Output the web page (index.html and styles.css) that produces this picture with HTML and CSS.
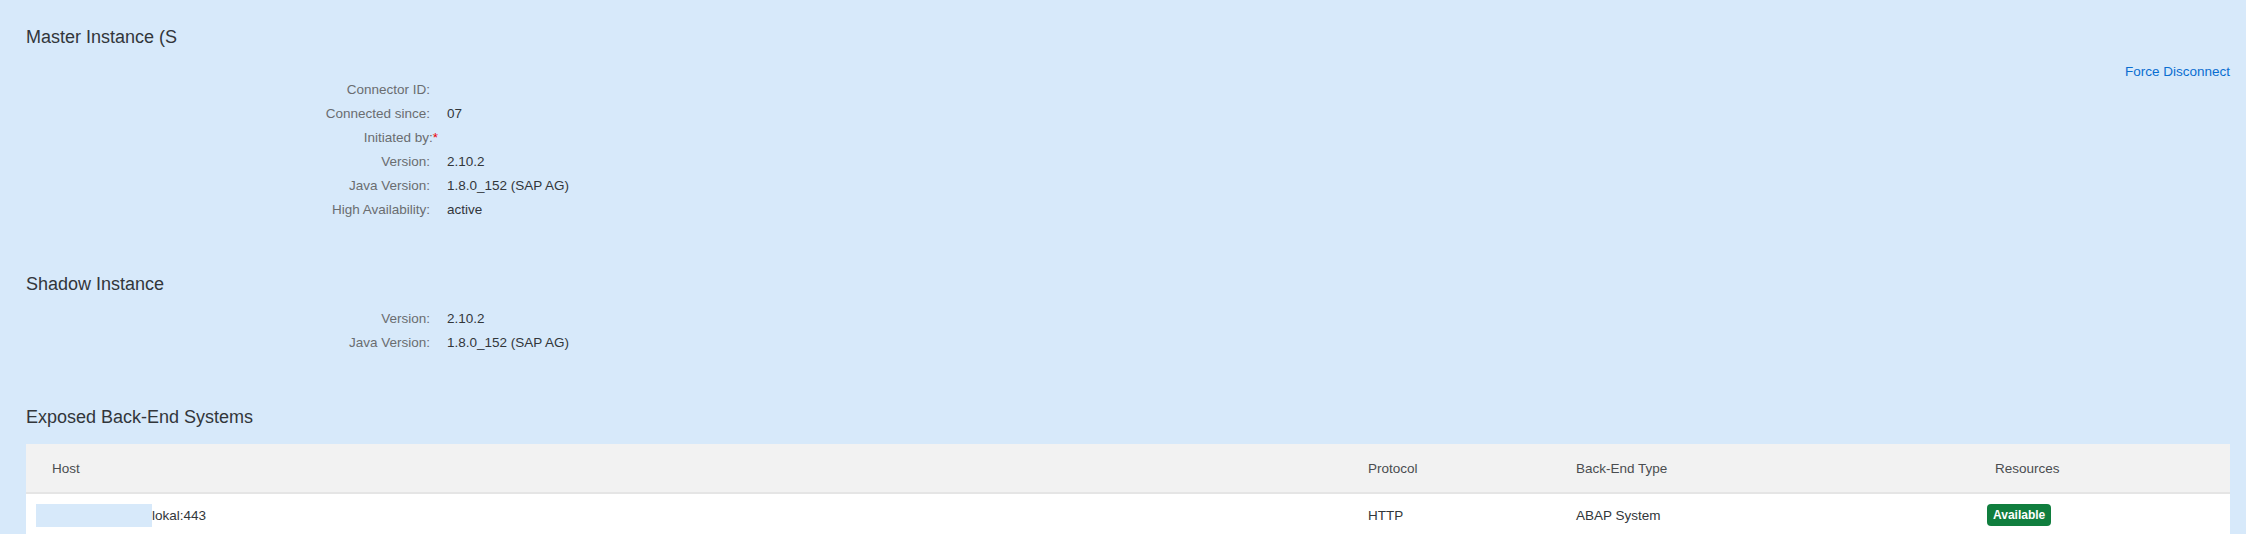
FILE: index.html
```html
<!DOCTYPE html>
<html lang="en">
<head>
    <meta charset="UTF-8" />
    <title>Connector</title>
    <link rel="stylesheet" href="styles.css">
</head>
<body>
    <div class="pagina">
        <h2 class="titulo">Master Instance (S</h2>
        <div class="barra">
            <a class="link" href="#">Force Disconnect</a>
        </div>
        <div class="form">
            <div class="rotulo">Connector ID:</div><div class="valor"></div>
            <div class="rotulo">Connected since:</div><div class="valor">07</div>
            <div class="rotulo">Initiated by:<span class="req">*</span></div><div class="valor"></div>
            <div class="rotulo">Version:</div><div class="valor">2.10.2</div>
            <div class="rotulo">Java Version:</div><div class="valor">1.8.0_152 (SAP AG)</div>
            <div class="rotulo">High Availability:</div><div class="valor">active</div>
        </div>

        <h2 class="titulo secao">Shadow Instance</h2>
        <div class="form">
            <div class="rotulo">Version:</div><div class="valor">2.10.2</div>
            <div class="rotulo">Java Version:</div><div class="valor">1.8.0_152 (SAP AG)</div>
        </div>

        <h2 class="titulo secao">Exposed Back-End Systems</h2>
        <div class="tabela">
            <div class="th host">Host</div>
            <div class="th">Protocol</div>
            <div class="th">Back-End Type</div>
            <div class="th recursos">Resources</div>

            <div class="td"><span class="oculto"></span>lokal:443</div>
            <div class="td">HTTP</div>
            <div class="td">ABAP System</div>
            <div class="td"><span class="status">Available</span></div>
        </div>
    </div>
</body>
</html>
```

FILE: styles.css
```css
body{
    margin: 0;
    background-color: #d7e9fa;
    font-family: 'Liberation Sans', Arial, sans-serif;
    color: #32363a;
}
.pagina{
    padding: 25px 16px 0 26px;
}
.titulo{
    margin: 0;
    font-size: 18px;
    font-weight: normal;
    line-height: 24px;
    color: #32363a;
}
.secao{
    margin-top: 50px;
}
.barra{
    display: flex;
    justify-content: flex-end;
    margin-top: 11px;
    height: 18px;
    padding-top: 4px;
    box-sizing: border-box;
}
.link{
    font-size: 13.5px;
    line-height: 16px;
    color: #0a6ed1;
    text-decoration: none;
}
.form{
    display: grid;
    grid-template-columns: 404px 1fr;
    column-gap: 17px;
    font-size: 13.5px;
    line-height: 24px;
}
.secao + .form{
    margin-top: 11px;
}
.rotulo{
    text-align: right;
    color: #6a6d70;
}
.valor{
    color: #32363a;
}
.req{
    color: #e00;
    margin-right: -8px;
}
.tabela{
    display: grid;
    grid-template-columns: 1332px 208px 411px 1fr;
    margin-top: 15px;
    font-size: 13.5px;
}
.th{
    background-color: #f2f2f2;
    height: 48px;
    display: flex;
    align-items: center;
    padding: 0 10px;
    border-bottom: 2px solid #e5e5e5;
    color: #4a4d50;
}
.th.host{
    padding-left: 26px;
}
.th.recursos{
    padding-left: 18px;
}
.td{
    background-color: #fff;
    height: 42px;
    display: flex;
    align-items: center;
    padding: 0 10px;
    color: #32363a;
}
.oculto{
    display: inline-block;
    width: 116px;
    height: 23px;
    background-color: #d7e9fa;
}
.status{
    display: inline-block;
    background-color: #107e3e;
    color: #fff;
    font-weight: bold;
    font-size: 12px;
    line-height: 22px;
    padding: 0 6px;
    border-radius: 4px;
}
```
